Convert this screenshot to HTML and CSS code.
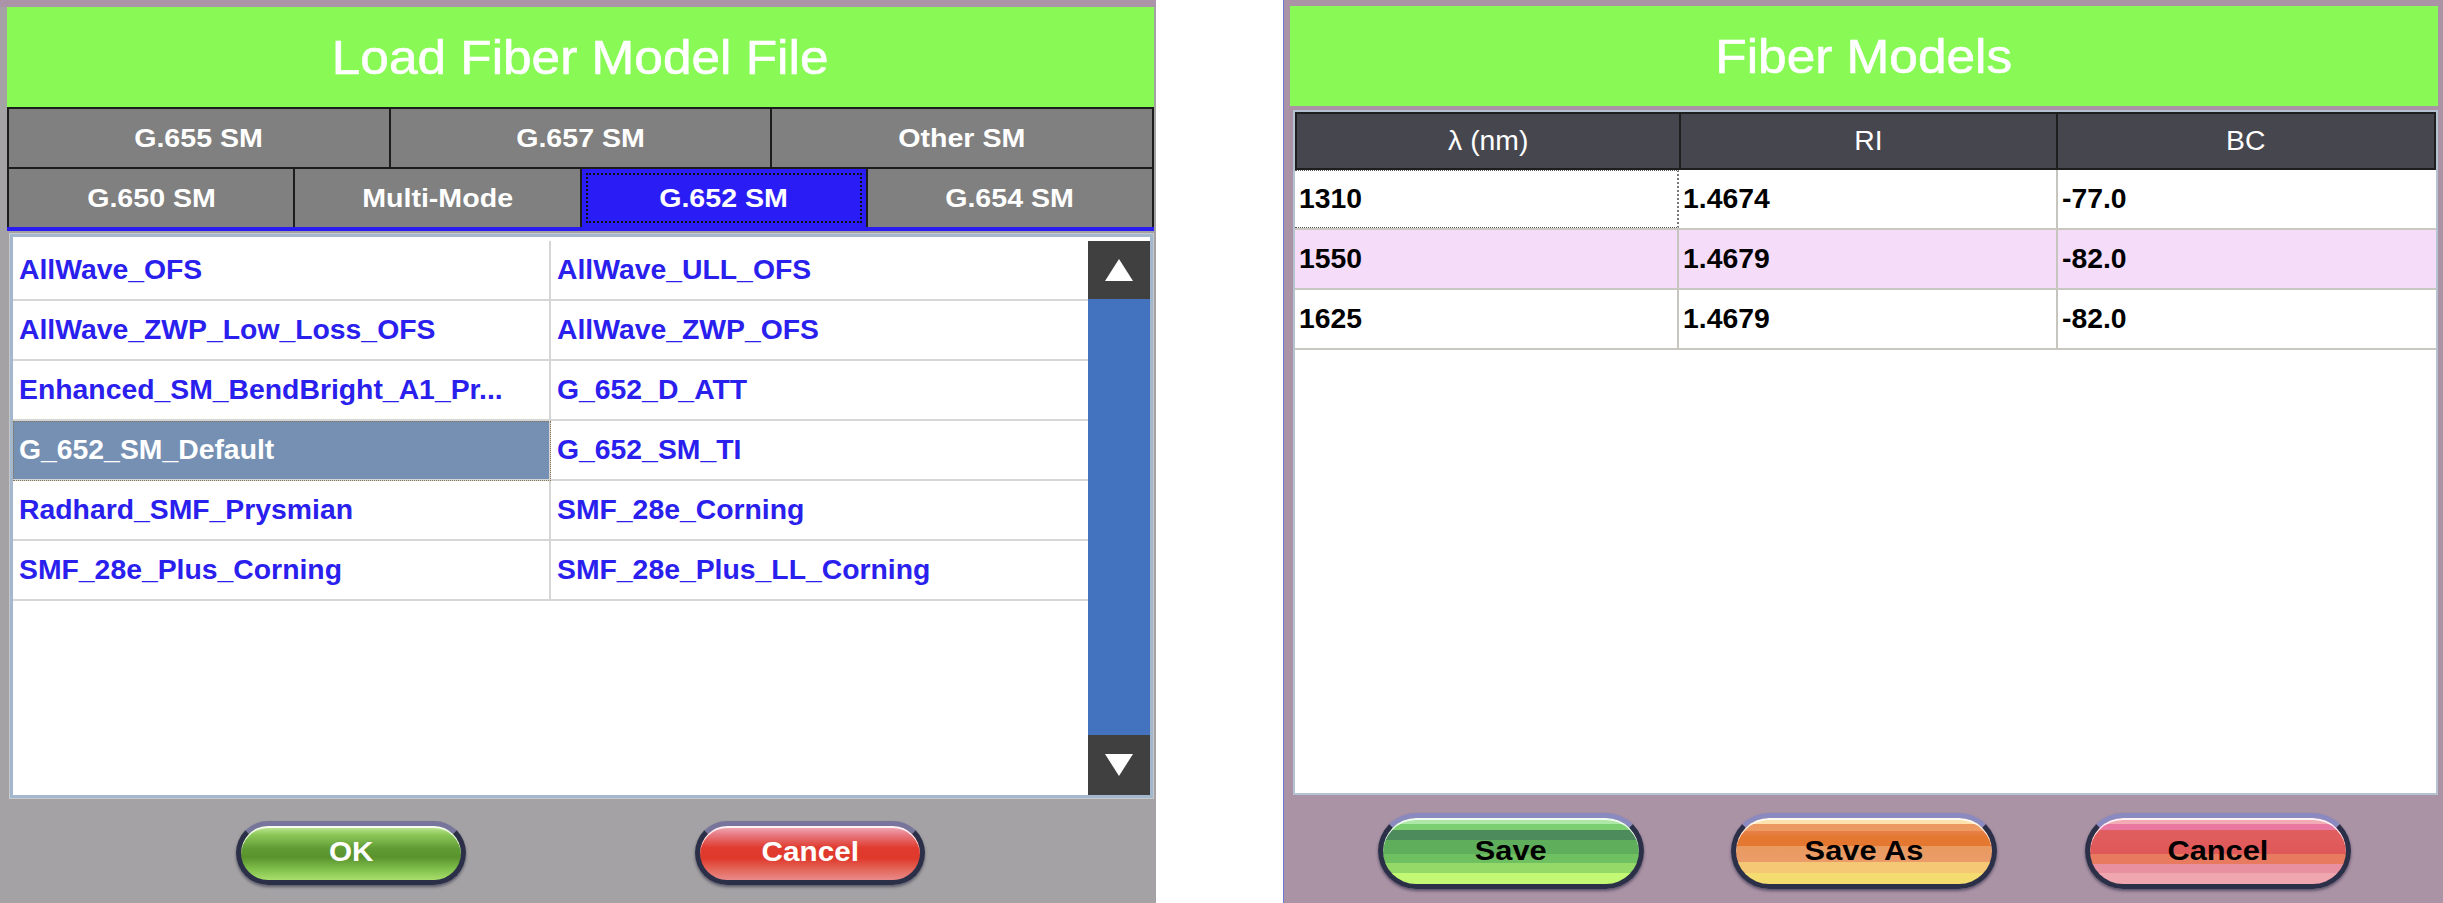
FILE: index.html
```html
<!DOCTYPE html>
<html lang="en">
<head>
  <meta charset="UTF-8" />
  <meta name="viewport" content="width=device-width, initial-scale=1" />
  <title>Fiber Models</title>
  <link rel="stylesheet" href="styles.css">
</head>

<body>
  <!-- Load Fiber Model File dialog -->
  <div class="panel load-panel">
    <div class="title"><span class="txt">Load Fiber Model File</span></div>

    <div class="tabs">
      <div class="tab-row three">
        <div class="tab"><span class="txt">G.655 SM</span></div>
        <div class="tab"><span class="txt">G.657 SM</span></div>
        <div class="tab"><span class="txt">Other SM</span></div>
      </div>
      <div class="tab-row four">
        <div class="tab"><span class="txt">G.650 SM</span></div>
        <div class="tab"><span class="txt">Multi-Mode</span></div>
        <div class="tab active"><span class="txt">G.652 SM</span></div>
        <div class="tab"><span class="txt">G.654 SM</span></div>
      </div>
    </div>

    <div class="list-box">
      <div class="file-grid">
        <div class="file"><span class="txt">AllWave_OFS</span></div>
        <div class="file"><span class="txt">AllWave_ULL_OFS</span></div>
        <div class="file"><span class="txt">AllWave_ZWP_Low_Loss_OFS</span></div>
        <div class="file"><span class="txt">AllWave_ZWP_OFS</span></div>
        <div class="file"><span class="txt">Enhanced_SM_BendBright_A1_Pr...</span></div>
        <div class="file"><span class="txt">G_652_D_ATT</span></div>
        <div class="file selected"><span class="txt">G_652_SM_Default</span></div>
        <div class="file"><span class="txt">G_652_SM_TI</span></div>
        <div class="file"><span class="txt">Radhard_SMF_Prysmian</span></div>
        <div class="file"><span class="txt">SMF_28e_Corning</span></div>
        <div class="file"><span class="txt">SMF_28e_Plus_Corning</span></div>
        <div class="file"><span class="txt">SMF_28e_Plus_LL_Corning</span></div>
      </div>
      <div class="scrollbar">
        <div class="scroll-btn up">
          <svg width="30" height="24" viewBox="0 0 30 24"><polygon points="15,1 29,23 1,23" fill="#fff"/></svg>
        </div>
        <div class="track"></div>
        <div class="scroll-btn down">
          <svg width="30" height="24" viewBox="0 0 30 24"><polygon points="1,1 29,1 15,23" fill="#fff"/></svg>
        </div>
      </div>
    </div>

    <div class="footer">
      <button class="btn btn-ok"><span class="txt">OK</span></button>
      <button class="btn btn-cancel"><span class="txt">Cancel</span></button>
    </div>
  </div>

  <!-- Fiber Models dialog -->
  <div class="panel fiber-panel">
    <div class="title"><span class="txt">Fiber Models</span></div>

    <div class="table-box">
      <div class="thead">
        <div class="th"><span class="txt">&lambda; (nm)</span></div>
        <div class="th"><span class="txt">RI</span></div>
        <div class="th"><span class="txt">BC</span></div>
      </div>
      <div class="trow">
        <div class="td focus"><span class="txt">1310</span></div>
        <div class="td"><span class="txt">1.4674</span></div>
        <div class="td"><span class="txt">-77.0</span></div>
      </div>
      <div class="trow pink">
        <div class="td"><span class="txt">1550</span></div>
        <div class="td"><span class="txt">1.4679</span></div>
        <div class="td"><span class="txt">-82.0</span></div>
      </div>
      <div class="trow">
        <div class="td"><span class="txt">1625</span></div>
        <div class="td"><span class="txt">1.4679</span></div>
        <div class="td"><span class="txt">-82.0</span></div>
      </div>
    </div>

    <div class="footer">
      <button class="btn big btn-save"><span class="txt">Save</span></button>
      <button class="btn big btn-saveas"><span class="txt">Save As</span></button>
      <button class="btn big btn-cancel2"><span class="txt">Cancel</span></button>
    </div>
  </div>
</body>
</html>
```

FILE: styles.css
```css
/* Base */
* {
  box-sizing: border-box;
}

body {
  margin: 0;
  width: 2443px;
  height: 903px;
  overflow: hidden;
  background: #fff;
  display: flex;
  font-family: 'Liberation Sans', Arial, sans-serif;
}

.txt {
  display: inline-block;
  white-space: nowrap;
  transform: scaleX(1.05);
  transform-origin: left center;
}

.panel {
  height: 903px;
  display: flex;
  flex-direction: column;
}

.title {
  height: 100px;
  flex: none;
  background: #88f955;
  color: #fff;
  font-size: 48px;
  -webkit-text-stroke: 0.6px #fff;
  display: flex;
  align-items: center;
  justify-content: center;
}

.title .txt {
  transform: scaleX(1.07);
}

.title .txt,
.tab .txt,
.th .txt,
.btn .txt {
  transform-origin: center center;
}

/* Left dialog */
.load-panel {
  width: 1156px;
  background: #a4a2a4;
  border-top: 7px solid #ab93a8;
  padding: 0 2px 0 7px;
}

.tabs {
  background: #1c1c1c;
  padding: 2px 2px 0;
  display: flex;
  flex-direction: column;
  gap: 2px;
  border-bottom: 4px solid #2a1cf0;
}

.tab-row {
  height: 58px;
  display: grid;
  gap: 2px;
}

.tab-row.three {
  grid-template-columns: repeat(3, 1fr);
}

.tab-row.four {
  grid-template-columns: repeat(4, 1fr);
}

.tab {
  background: #808080;
  color: #fff;
  font-size: 26px;
  font-weight: 700;
  display: flex;
  align-items: center;
  justify-content: center;
}

.tab .txt {
  transform: scaleX(1.1);
}

.tab.active {
  background: #2a1cf5;
  outline: 2px dotted #111;
  outline-offset: -6px;
}

.list-box {
  height: 564px;
  margin: 3px 1px 0 3px;
  background: #fff;
  border: 3px solid #a3b8cc;
  box-shadow: 0 0 0 1px #c6c8cc;
  padding-top: 4px;
  display: flex;
}

.file-grid {
  flex: 1;
  display: grid;
  grid-template-columns: 1fr 1fr;
  grid-auto-rows: 60px;
  align-content: start;
}

.file {
  border-bottom: 2px solid #d6d6d6;
  color: #2a20ee;
  font-size: 27px;
  font-weight: 700;
  padding-left: 6px;
  display: flex;
  align-items: center;
}

.file:nth-child(odd) {
  border-right: 2px solid #d6d6d6;
}

.file.selected {
  background: #7590b3;
  color: #fff;
  outline: 1px dotted #8a7458;
  outline-offset: -1px;
}

.scrollbar {
  width: 62px;
  display: flex;
  flex-direction: column;
}

.scroll-btn {
  background: #404040;
  display: flex;
  align-items: center;
  justify-content: center;
}

.scroll-btn.up {
  height: 58px;
}

.scroll-btn.down {
  height: 60px;
}

.track {
  flex: 1;
  background: #4372bf;
}

.footer {
  flex: 1;
  display: flex;
  align-items: center;
  justify-content: space-evenly;
  padding-top: 4px;
}

/* Glossy pill buttons */
.btn {
  width: 230px;
  height: 64px;
  border-radius: 34px;
  border: 5px solid #2b2f48;
  border-top-color: #77759c;
  box-shadow: 0 2px 3px rgba(20, 20, 50, 0.5), inset 0 2px 0 rgba(255, 255, 255, 0.85);
  color: #fff;
  font-family: 'Liberation Sans', Arial, sans-serif;
  font-size: 27px;
  font-weight: 700;
  padding: 0;
}

.btn .txt {
  transform: scaleX(1.1);
}

.btn-ok {
  background: linear-gradient(180deg, #c6ec9e 0%, #8cc858 16%, #5f9b33 42%, #5a932e 58%, #7cbc48 78%, #a9df6c 100%);
}

.btn-cancel {
  background: linear-gradient(180deg, #f2b2bd 0%, #e77a82 16%, #e03b2e 40%, #df392c 60%, #e36658 80%, #ea8a8a 100%);
}

.btn.big {
  width: 266px;
  height: 76px;
  border-radius: 40px;
  border-top-color: #8a8ac0;
  color: #000;
  font-size: 28px;
}

.btn-save {
  background: linear-gradient(180deg, #aee8a6 0%, #aee8a6 9%, #7ccf70 9%, #7ccf70 18%, #4d8a5c 18%, #4d8a5c 33%, #5fae5c 33%, #5fae5c 55%, #6fc060 55%, #6fc060 68%, #95d968 68%, #95d968 84%, #c2f874 84%);
}

.btn-saveas {
  background: linear-gradient(180deg, #fde2ae 0%, #fde2ae 9%, #ed9a62 9%, #ed9a62 20%, #e88048 20%, #e47830 30%, #e47830 42%, #e89a60 42%, #ec9c68 66%, #f4c874 66%, #f4c874 84%, #f4dc70 84%);
}

.btn-cancel2 {
  background: linear-gradient(180deg, #f2aab4 0%, #f2aab4 9%, #e878a0 9%, #e878a0 18%, #e05e60 18%, #e05858 55%, #e87a60 55%, #e87a60 70%, #e890a0 70%, #e890a0 84%, #f0a6ae 84%);
}

/* Right dialog */
.fiber-panel {
  width: 1160px;
  margin-left: 127px;
  background: #ab93a6;
  border-left: 1px solid #6a78d8;
  padding: 6px 5px 0 6px;
}

.table-box {
  height: 685px;
  flex: none;
  margin: 4px 0 0 3px;
  background: #fff;
  border: 2px solid #b4c2d2;
}

.thead,
.trow {
  display: grid;
  grid-template-columns: 383fr 377fr 377fr;
}

.thead {
  height: 58px;
  background: #1e1e1e;
  gap: 2px;
  padding: 2px;
}

.th {
  background: #46464f;
  color: #fff;
  font-size: 27px;
  display: flex;
  align-items: center;
  justify-content: center;
}

.trow {
  height: 60px;
  border-bottom: 2px solid #c8c8c0;
}

.trow.pink {
  background: #f5dcf9;
}

.td {
  color: #000;
  font-size: 27px;
  font-weight: 700;
  padding-left: 4px;
  display: flex;
  align-items: center;
  border-right: 2px solid #c6c6be;
}

.td:last-child {
  border-right: none;
}

.td.focus {
  border-top: 1px dotted #555;
  border-bottom: 1px dotted #555;
  border-right-style: dotted;
  border-right-color: #777;
}
```
